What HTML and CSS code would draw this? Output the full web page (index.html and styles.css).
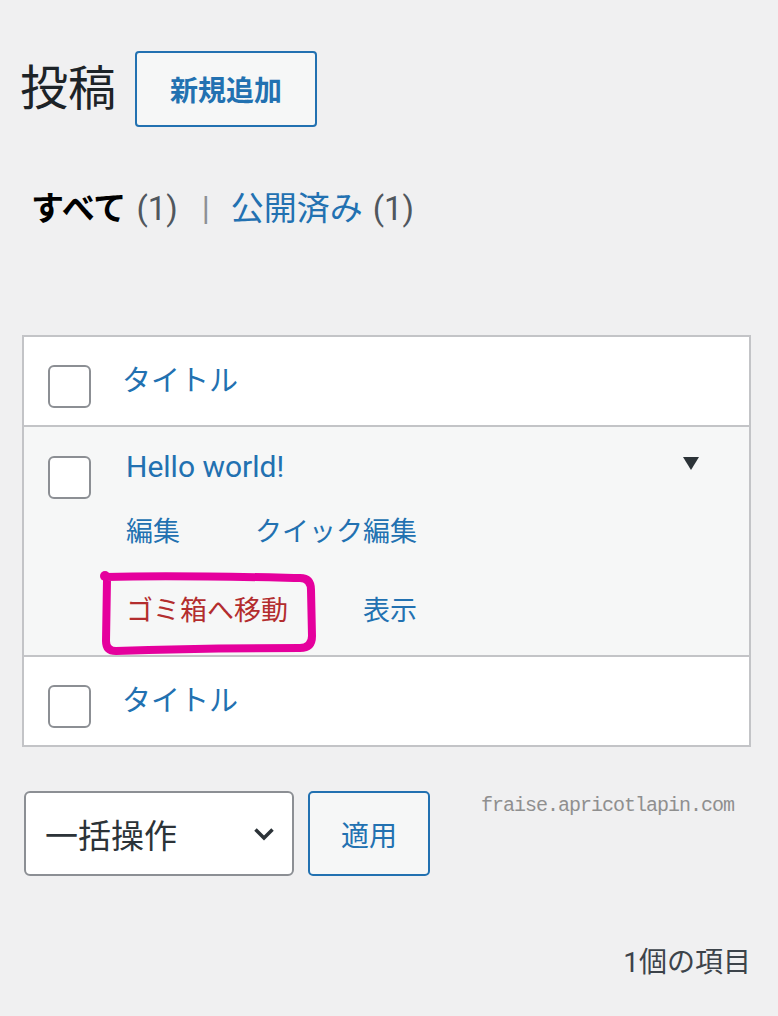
FILE: index.html
```html
<!DOCTYPE html>
<html lang="ja">

<head>
    <meta charset="UTF-8">
    <meta name="viewport" content="width=device-width, initial-scale=1.0">
    <title>投稿</title>
    <link rel="stylesheet" href="styles.css">
</head>

<body>
    <div class="wrap">
        <div class="page-head">
            <h1 class="page-title">投稿</h1>
            <a class="add-new" href="#">新規追加</a>
        </div>

        <ul class="subsubsub">
            <li class="current">すべて<span class="count">(1)</span></li>
            <li class="sep">|</li>
            <li><a href="#">公開済み</a><span class="count">(1)</span></li>
        </ul>

        <div class="posts-table">
            <div class="post-row head-row">
                <span class="check"></span>
                <a class="col-title" href="#">タイトル</a>
            </div>

            <div class="post-row item-row">
                <span class="check"></span>
                <div class="row-main">
                    <a class="row-title" href="#">Hello world!</a>
                    <div class="row-actions">
                        <a href="#">編集</a>
                        <a href="#">クイック編集</a>
                        <a class="trash" href="#">ゴミ箱へ移動</a>
                        <a href="#">表示</a>
                    </div>
                </div>
                <span class="toggle"></span>
                <!-- hand drawn marker around the trash link -->
                <svg class="scribble" width="220" height="90" viewBox="0 0 220 90">
                    <path d="M6,9 C70,7 150,9 200,10 Q211,10 211,22 L212,68 Q212,80 200,80 C150,80 70,81 16,83 Q6,83 6,73 L7,12" />
                    <circle cx="5" cy="8" r="5" />
                </svg>
            </div>

            <div class="post-row head-row">
                <span class="check"></span>
                <a class="col-title" href="#">タイトル</a>
            </div>
        </div>

        <div class="bulk-bar">
            <div class="bulk-select">
                <span>一括操作</span>
                <svg width="22" height="14" viewBox="0 0 22 14">
                    <polyline points="2.5,2.5 11,11 19.5,2.5" />
                </svg>
            </div>
            <button class="apply" type="button">適用</button>
            <span class="watermark">fraise.apricotlapin.com</span>
        </div>

        <p class="items-count">1個の項目</p>
    </div>
</body>

</html>
```

FILE: styles.css
```css
body {
    margin: 0;
    background-color: #f0f0f1;
    font-family: Roboto, "Noto Sans CJK JP", sans-serif;
    color: #1d2327;
}

a {
    color: #2271b1;
    text-decoration: none;
}

.wrap {
    padding: 51px 27px 0 22px;
}

.page-head {
    display: flex;
    align-items: center;
    gap: 19px;
}

.page-title {
    margin: 0 0 0 -2px;
    font-size: 48px;
    font-weight: 400;
    line-height: 1;
    color: #1d2327;
}

.add-new {
    display: inline-flex;
    align-items: center;
    height: 76px;
    padding: 0 33px;
    box-sizing: border-box;
    border: 2px solid #2271b1;
    border-radius: 4px;
    background-color: #f6f7f7;
    font-size: 28px;
    font-weight: 700;
}

.subsubsub {
    display: flex;
    list-style: none;
    margin: 62px 0 0;
    padding: 0 0 0 9px;
    font-size: 33px;
    line-height: 40px;
}

.subsubsub .current {
    font-weight: 700;
    color: #000;
}

.subsubsub .count {
    margin-left: 10px;
    font-weight: 400;
    color: #50575e;
}

.subsubsub .sep {
    margin: 0 21px 0 24px;
    color: #8c8f94;
}

.posts-table {
    margin-top: 106px;
    border: 2px solid #c3c4c7;
    background-color: #fff;
}

.post-row {
    display: flex;
    align-items: flex-start;
    padding: 24px 24px 17px;
    line-height: 40px;
    font-size: 29px;
}

.post-row + .post-row {
    border-top: 2px solid #c3c4c7;
}

.check {
    flex: none;
    width: 43px;
    height: 43px;
    box-sizing: border-box;
    margin-top: 4px;
    border: 2px solid #8c8f94;
    border-radius: 6px;
    background-color: #fff;
}

.col-title {
    margin-left: 31px;
}

.item-row {
    position: relative;
    padding: 20px 50px 24px 24px;
    background-color: #f6f7f7;
    font-size: 30px;
}

.item-row .check {
    margin-top: 9px;
}

.row-main {
    flex: 1;
    margin-left: 35px;
}

.row-actions {
    display: flex;
    flex-wrap: wrap;
    max-width: 300px;
    column-gap: 75px;
    row-gap: 39px;
    margin-top: 25px;
    font-size: 27px;
}

.row-actions .trash {
    color: #b32d2e;
}

.toggle {
    flex: none;
    width: 0;
    height: 0;
    margin-top: 10px;
    border-left: 8px solid transparent;
    border-right: 8px solid transparent;
    border-top: 13px solid #2c3338;
}

.scribble {
    position: absolute;
    left: 76px;
    top: 141px;
    fill: none;
}

.scribble path {
    stroke: #e5009d;
    stroke-width: 8;
    stroke-linecap: round;
    stroke-linejoin: round;
}

.scribble circle {
    fill: #e5009d;
}

.bulk-bar {
    display: flex;
    align-items: flex-start;
    margin-top: 44px;
    padding-left: 2px;
}

.bulk-select {
    display: flex;
    align-items: center;
    justify-content: space-between;
    width: 270px;
    height: 85px;
    box-sizing: border-box;
    padding: 0 17px 0 19px;
    border: 2px solid #8c8f94;
    border-radius: 6px;
    background-color: #fff;
    font-size: 33px;
    color: #2c3338;
}

.bulk-select polyline {
    fill: none;
    stroke: #2c3338;
    stroke-width: 3.5;
}

.apply {
    width: 122px;
    height: 85px;
    margin-left: 14px;
    border: 2px solid #2271b1;
    border-radius: 5px;
    background-color: #f6f7f7;
    font-family: inherit;
    font-size: 28px;
    color: #2271b1;
}

.watermark {
    margin: 0 0 0 51px;
    font-family: "Liberation Mono", monospace;
    font-size: 20px;
    letter-spacing: -1px;
    line-height: 30px;
    color: #8f8f8f;
}

.items-count {
    margin: 67px 0 0;
    text-align: right;
    font-size: 28px;
    line-height: 40px;
    color: #3c434a;
}
```
